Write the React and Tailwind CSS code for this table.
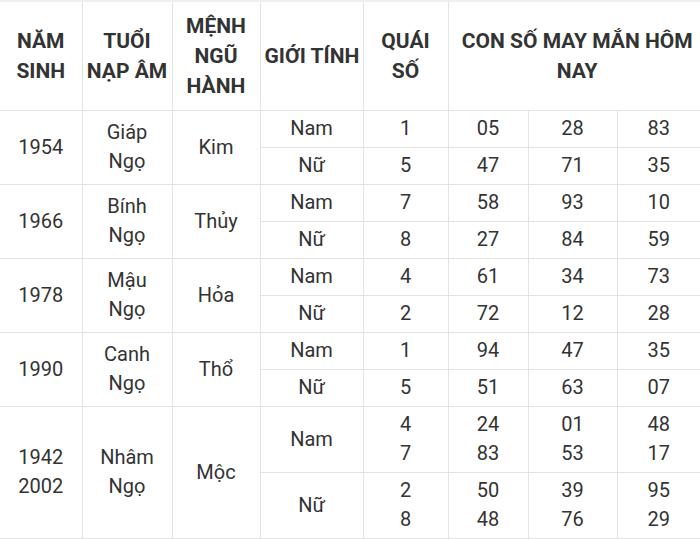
import React from 'react'

const ROWS = [
  {
    year: ['1954'], tuoi: ['Giáp', 'Ngọ'], menh: 'Kim', h: 'h-[37px]',
    genders: [
      { g: 'Nam', q: ['1'], nums: [['05'], ['28'], ['83']] },
      { g: 'Nữ', q: ['5'], nums: [['47'], ['71'], ['35']] },
    ],
  },
  {
    year: ['1966'], tuoi: ['Bính', 'Ngọ'], menh: 'Thủy', h: 'h-[37px]',
    genders: [
      { g: 'Nam', q: ['7'], nums: [['58'], ['93'], ['10']] },
      { g: 'Nữ', q: ['8'], nums: [['27'], ['84'], ['59']] },
    ],
  },
  {
    year: ['1978'], tuoi: ['Mậu', 'Ngọ'], menh: 'Hỏa', h: 'h-[37px]',
    genders: [
      { g: 'Nam', q: ['4'], nums: [['61'], ['34'], ['73']] },
      { g: 'Nữ', q: ['2'], nums: [['72'], ['12'], ['28']] },
    ],
  },
  {
    year: ['1990'], tuoi: ['Canh', 'Ngọ'], menh: 'Thổ', h: 'h-[37px]',
    genders: [
      { g: 'Nam', q: ['1'], nums: [['94'], ['47'], ['35']] },
      { g: 'Nữ', q: ['5'], nums: [['51'], ['63'], ['07']] },
    ],
  },
  {
    year: ['1942', '2002'], tuoi: ['Nhâm', 'Ngọ'], menh: 'Mộc', h: 'h-[66px]',
    genders: [
      { g: 'Nam', q: ['4', '7'], nums: [['24', '83'], ['01', '53'], ['48', '17']] },
      { g: 'Nữ', q: ['2', '8'], nums: [['50', '48'], ['39', '76'], ['95', '29']] },
    ],
  },
]

// text with forced line breaks
function Lines({ items }) {
  return items.map((t, i) => (
    <React.Fragment key={i}>
      {i > 0 && <br />}
      {t}
    </React.Fragment>
  ))
}

const cell = 'border border-[#e3e3e3] text-center align-middle px-1 py-0'

export default function App() {
  return (
    <div className="w-[700px] h-[539px] bg-white overflow-hidden" style={{ fontFamily: 'Roboto, "Liberation Sans", sans-serif' }}>
      <table className="w-[700px] table-fixed border-collapse text-[20px] text-[#333] border-t-2 border-t-[#efefef] border-x-0">
        <colgroup>
          <col className="w-[82px]" />
          <col className="w-[90px]" />
          <col className="w-[88px]" />
          <col className="w-[103px]" />
          <col className="w-[85px]" />
          <col className="w-[80px]" />
          <col className="w-[89px]" />
          <col className="w-[83px]" />
        </colgroup>
        <thead>
          <tr className="h-[109px] font-bold text-[21px] leading-[30px] whitespace-nowrap">
            <th className={cell + ' border-l-0 border-t-0'}><Lines items={['NĂM', 'SINH']} /></th>
            <th className={cell + ' border-t-0'}><Lines items={['TUỔI', 'NẠP ÂM']} /></th>
            <th className={cell + ' border-t-0'}><Lines items={['MỆNH', 'NGŨ', 'HÀNH']} /></th>
            <th className={cell + ' border-t-0 px-0'}>GIỚI TÍNH</th>
            <th className={cell + ' border-t-0'}><Lines items={['QUÁI', 'SỐ']} /></th>
            <th colSpan={3} className={cell + ' border-t-0 border-r-0 pl-[10px]'}><Lines items={['CON SỐ MAY MẮN HÔM', 'NAY']} /></th>
          </tr>
        </thead>
        <tbody className="leading-[29px]">
          {ROWS.map(r =>
            r.genders.map((gr, gi) => (
              <tr key={r.year[0] + gr.g} className={r.h}>
                {gi === 0 && (
                  <>
                    <td rowSpan={2} className={cell + ' border-l-0'}><Lines items={r.year} /></td>
                    <td rowSpan={2} className={cell}><Lines items={r.tuoi} /></td>
                    <td rowSpan={2} className={cell}>{r.menh}</td>
                  </>
                )}
                <td className={cell}>{gr.g}</td>
                <td className={cell}><Lines items={gr.q} /></td>
                {gr.nums.map((n, ni) => (
                  <td key={ni} className={cell + (ni === 2 ? ' border-r-0' : '')}><Lines items={n} /></td>
                ))}
              </tr>
            ))
          )}
        </tbody>
      </table>
    </div>
  )
}
